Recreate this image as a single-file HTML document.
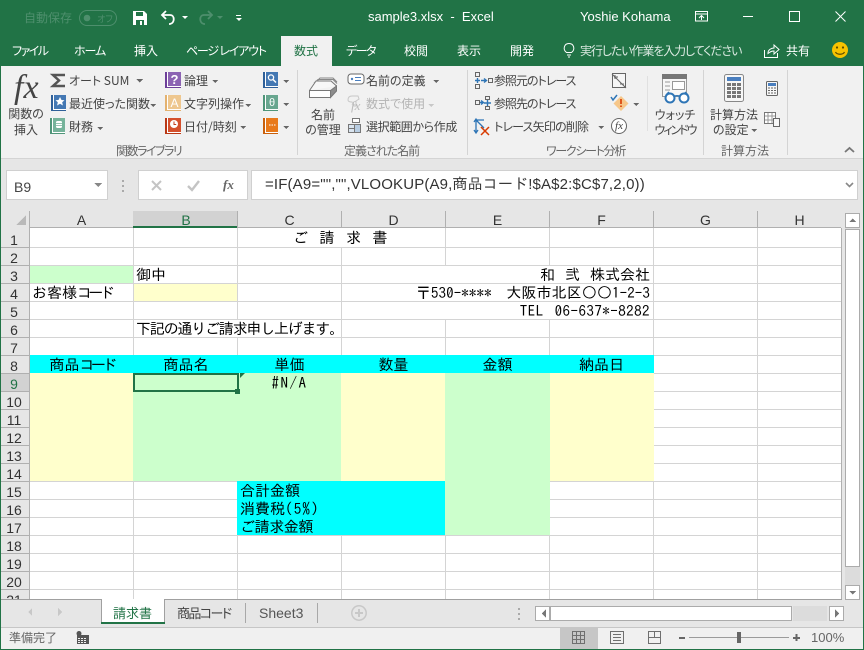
<!DOCTYPE html>
<html lang="ja"><head><meta charset="utf-8"><title>sample3.xlsx - Excel</title>
<style>
html,body{margin:0;padding:0;background:#fff}
#p{position:relative;width:864px;height:650px;overflow:hidden;font-family:"Liberation Sans","Noto Sans CJK JP",sans-serif;font-size:12px;color:#444}
#p svg{position:absolute;left:0;top:0}
.a{position:absolute;white-space:nowrap;line-height:16px}
.w{color:#fff}
.r{font-family:"Noto Sans CJK JP",sans-serif;font-size:12px;font-feature-settings:"palt";color:#444}
.g{font-family:"Noto Sans CJK JP",sans-serif;font-size:12px;font-feature-settings:"palt";color:#666}
.c{font-family:"IPAGothic","Noto Sans CJK JP",sans-serif;font-size:15px;color:#000;line-height:18px}
.k{letter-spacing:-3.7px}
.h{font-family:"Liberation Sans",sans-serif;font-size:14px;color:#333;text-align:center;line-height:18px}
.m{text-align:center}
</style></head><body><div id="p">
<svg width="864" height="650" viewBox="0 0 864 650" fill="none" shape-rendering="crispEdges">
<rect width="864" height="650" fill="#e6e6e6"/>
<rect width="864" height="66" fill="#217346"/>
<rect x="281" y="36" width="51" height="30" fill="#f1f1f1"/>
<rect x="1" y="66" width="863" height="92" fill="#f1f1f1"/>
<rect y="158" width="864" height="1" fill="#d4d4d4"/>
<rect x="0" y="66" width="1" height="584" fill="#217346"/>
<rect x="863" y="66" width="1" height="584" fill="#217346"/>
<rect y="649" width="864" height="1" fill="#217346"/>
<g fill="#d4d4d4"><rect x="297" y="70" width="1" height="85"/><rect x="467" y="70" width="1" height="85"/><rect x="703" y="70" width="1" height="85"/><rect x="787" y="70" width="1" height="85"/></g>
<rect x="647" y="76" width="1" height="55" fill="#e0e0e0"/>
<!-- formula bar -->
<rect x="6.5" y="170.5" width="101" height="29" fill="#fff" stroke="#d0d0d0"/>
<rect x="138.5" y="170.5" width="109" height="29" fill="#fff" stroke="#d0d0d0"/>
<rect x="251.5" y="170.5" width="606" height="29" fill="#fff" stroke="#d0d0d0"/>
<path d="M94 183h8l-4 4z" fill="#888"/>
<g fill="#aaa"><rect x="122" y="180" width="2" height="2"/><rect x="122" y="185" width="2" height="2"/><rect x="122" y="190" width="2" height="2"/></g>
<g shape-rendering="auto"><path d="M152 181l9 9M161 181l-9 9" stroke="#c4c4c4" stroke-width="2"/><path d="M188 186l4 4 7-9" stroke="#c4c4c4" stroke-width="2.4"/><path d="M846 183l3.500 3.500 3.500-3.500" stroke="#888" stroke-width="1.6"/></g>
<!-- grid -->
<rect x="30" y="228" width="811" height="371" fill="#fff"/>
<g fill="#ccffcc"><rect x="30" y="265" width="103" height="18"/><rect x="133" y="373" width="208" height="108"/><rect x="445" y="373" width="105" height="162"/></g>
<g fill="#ffffcc"><rect x="133" y="283" width="105" height="18"/><rect x="30" y="373" width="103" height="108"/><rect x="341" y="373" width="104" height="108"/><rect x="550" y="373" width="104" height="108"/></g>
<g fill="#00ffff"><rect x="30" y="355" width="624" height="18"/><rect x="237" y="481" width="208" height="54"/></g>
<g fill="#d4d4d4">
<rect x="30" y="247" width="811" height="1"/><rect x="30" y="265" width="811" height="1"/>
<rect x="133" y="283" width="708" height="1"/><rect x="30" y="301" width="811" height="1"/>
<rect x="30" y="319" width="811" height="1"/><rect x="30" y="337" width="811" height="1"/>
<rect x="30" y="283" width="103" height="1"/>
<rect x="654" y="355" width="187" height="1"/>
<rect x="654" y="373" width="187" height="1"/><rect x="654" y="391" width="187" height="1"/>
<rect x="654" y="409" width="187" height="1"/><rect x="654" y="427" width="187" height="1"/>
<rect x="654" y="445" width="187" height="1"/><rect x="654" y="463" width="187" height="1"/>
<rect x="30" y="481" width="207" height="1"/><rect x="550" y="481" width="291" height="1"/>
<rect x="30" y="499" width="207" height="1"/><rect x="550" y="499" width="291" height="1"/>
<rect x="30" y="517" width="207" height="1"/><rect x="550" y="517" width="291" height="1"/>
<rect x="30" y="535" width="811" height="1"/><rect x="30" y="553" width="811" height="1"/>
<rect x="30" y="571" width="811" height="1"/><rect x="30" y="589" width="811" height="1"/>
<rect x="133" y="228" width="1" height="127"/><rect x="133" y="481" width="1" height="118"/>
<rect x="237" y="228" width="1" height="91"/><rect x="237" y="337" width="1" height="18"/><rect x="237" y="535" width="1" height="64"/>
<rect x="341" y="247" width="1" height="108"/><rect x="341" y="535" width="1" height="64"/>
<rect x="445" y="228" width="1" height="37"/><rect x="445" y="319" width="1" height="36"/><rect x="445" y="535" width="1" height="64"/>
<rect x="549" y="228" width="1" height="37"/><rect x="549" y="319" width="1" height="36"/><rect x="549" y="535" width="1" height="64"/>
<rect x="653" y="228" width="1" height="127"/><rect x="653" y="481" width="1" height="118"/>
<rect x="757" y="228" width="1" height="371"/>
</g>
<!-- headers -->
<rect x="133" y="211" width="105" height="17" fill="#d2d2d2"/><rect x="133" y="226" width="105" height="2" fill="#217346"/>
<rect x="1" y="373" width="28" height="18" fill="#d2d2d2"/>
<g fill="#b0b0b0"><rect x="29" y="211" width="1" height="17"/><rect x="237" y="211" width="1" height="17"/><rect x="341" y="211" width="1" height="17"/><rect x="445" y="211" width="1" height="17"/><rect x="549" y="211" width="1" height="17"/><rect x="653" y="211" width="1" height="17"/><rect x="757" y="211" width="1" height="17"/><rect x="238" y="227" width="603" height="1"/><rect x="30" y="227" width="103" height="1"/><rect x="1" y="247" width="29" height="1"/><rect x="1" y="265" width="29" height="1"/><rect x="1" y="283" width="29" height="1"/><rect x="1" y="301" width="29" height="1"/><rect x="1" y="319" width="29" height="1"/><rect x="1" y="337" width="29" height="1"/><rect x="1" y="355" width="29" height="1"/><rect x="1" y="373" width="29" height="1"/><rect x="1" y="391" width="29" height="1"/><rect x="1" y="409" width="29" height="1"/><rect x="1" y="427" width="29" height="1"/><rect x="1" y="445" width="29" height="1"/><rect x="1" y="463" width="29" height="1"/><rect x="1" y="481" width="29" height="1"/><rect x="1" y="499" width="29" height="1"/><rect x="1" y="517" width="29" height="1"/><rect x="1" y="535" width="29" height="1"/><rect x="1" y="553" width="29" height="1"/><rect x="1" y="571" width="29" height="1"/><rect x="1" y="589" width="29" height="1"/><rect x="29" y="228" width="1" height="371"/><rect x="841" y="228" width="1" height="372"/></g>
<path d="M16 225h10v-10z" fill="#b9b9b9"/>
<rect x="134" y="374" width="104" height="17" fill="none" stroke="#217346" stroke-width="2"/>
<rect x="235" y="389" width="5" height="5" fill="#217346"/>
<path d="M240 373h5l-5 5z" fill="#217346" shape-rendering="auto"/>
<!-- scrollbars -->
<rect x="845" y="213" width="15" height="387" fill="#dcdcdc"/>
<rect x="845.5" y="213.5" width="14" height="14" fill="#fff" stroke="#ababab"/>
<path d="M849 222h7l-3.500-3.500z" fill="#777"/>
<rect x="845.5" y="229.500" width="14" height="337" fill="#fff" stroke="#ababab"/>
<rect x="845.5" y="585.5" width="14" height="14" fill="#fff" stroke="#ababab"/>
<path d="M849 591h7l-3.500 3.500z" fill="#777"/>
<rect x="793" y="606" width="34" height="15" fill="#dcdcdc"/>
<rect x="535.5" y="606.5" width="14" height="14" fill="#fff" stroke="#ababab"/>
<path d="M546 609v9l-4-4.500z" fill="#777"/>
<rect x="550.5" y="606.5" width="241" height="14" fill="#fff" stroke="#ababab"/>
<rect x="829.5" y="606.5" width="14" height="14" fill="#fff" stroke="#ababab"/>
<path d="M835 609v9l4-4.500z" fill="#777"/>
<g fill="#aaa"><rect x="518" y="608" width="2" height="2"/><rect x="518" y="613" width="2" height="2"/><rect x="518" y="618" width="2" height="2"/></g>
<!-- tab bar -->
<rect x="1" y="599" width="841" height="1" fill="#a0a0a0"/>
<rect x="102" y="599" width="62" height="24" fill="#fff"/>
<rect x="101" y="599" width="1" height="24" fill="#a0a0a0"/><rect x="164" y="599" width="1" height="24" fill="#a0a0a0"/>
<rect x="101" y="622" width="64" height="2" fill="#217346"/>
<rect x="245" y="603" width="1" height="20" fill="#a8a8a8"/><rect x="317" y="603" width="1" height="20" fill="#a8a8a8"/>
<path d="M32 608v8l-4-4zM58 608v8l4-4z" fill="#c8c8c8"/>
<g shape-rendering="auto"><circle cx="359" cy="613" r="7.200" stroke="#c8c8c8" stroke-width="1.500"/><path d="M355 613h8M359 609v8" stroke="#c8c8c8" stroke-width="2"/></g>
<!-- status bar -->
<rect x="1" y="627" width="862" height="1" fill="#c6c6c6"/>
<rect x="1" y="628" width="862" height="21" fill="#f0f0f0"/>
<rect x="560" y="628" width="38" height="21" fill="#c6c6c6"/>
<g stroke="#6f6f6f"><rect x="572.5" y="631.5" width="12" height="12"/><path d="M576.5 632v11M580.500 632v11M573 635.500h11M573 639.500h11"/><rect x="610.500" y="631.5" width="13" height="12"/><path d="M613 634.500h8M613 637.500h8M613 640.500h8"/><rect x="648.500" y="631.5" width="12" height="12"/><path d="M654.500 632v5M648.500 637.500h12"/></g>
<rect x="679" y="637" width="6" height="2" fill="#666"/>
<rect x="689" y="637" width="100" height="1" fill="#9b9b9b"/>
<rect x="737" y="632" width="4" height="11" fill="#666"/>
<path d="M793 638h7M796.500 634v7" stroke="#666" stroke-width="2"/>
<g fill="#555"><circle cx="79" cy="633.500" r="2.500" shape-rendering="auto"/><rect x="77" y="635" width="12" height="9"/><g fill="#f0f0f0"><rect x="78" y="638" width="2" height="1"/><rect x="81" y="638" width="2" height="1"/><rect x="84" y="638" width="2" height="1"/><rect x="78" y="640" width="2" height="1"/><rect x="81" y="640" width="2" height="1"/><rect x="84" y="640" width="2" height="1"/><rect x="78" y="642" width="2" height="1"/><rect x="81" y="642" width="2" height="1"/><rect x="84" y="642" width="2" height="1"/></g></g>
<!-- title bar icons -->
<g shape-rendering="auto">
<rect x="79.500" y="10.500" width="37" height="15" rx="7.500" stroke="#4e8f6d"/>
<circle cx="87" cy="18" r="3.300" fill="#4e8f6d"/>
<path d="M133 11h11l3 3v11h-14z" fill="#fff"/><rect x="136" y="12" width="7" height="4" fill="#217346"/><rect x="136" y="20" width="8" height="5" fill="#217346"/><rect x="140" y="21" width="2" height="4" fill="#fff"/>
<path d="M166 11l-4 4 4 4" stroke="#fff" stroke-width="1.800"/><path d="M163 15h7c5 0 5 8 0 9h-1" stroke="#fff" stroke-width="1.800"/>
<path d="M182 16h6l-3 3z" fill="#fff"/>
<path d="M208 11l4 4-4 4" stroke="#4e8f6d" stroke-width="1.800"/><path d="M211 15h-7c-5 0-5 8 0 9h1" stroke="#4e8f6d" stroke-width="1.800"/>
<path d="M217 16h6l-3 3z" fill="#4e8f6d"/>
<path d="M236 15.500h5" stroke="#fff"/><path d="M236 18h6l-3 3z" fill="#fff"/>
<rect x="695.500" y="11.500" width="12" height="9.500" stroke="#fff"/><path d="M695 14h13M701.500 20v-4M699 18l2.500-2.500 2.500 2.500" stroke="#fff"/>
<path d="M743 16.500h10" stroke="#fff"/><rect x="789.500" y="11.500" width="10" height="10" stroke="#fff" shape-rendering="crispEdges"/>
<path d="M835.500 11.500l10 10M845.500 11.500l-10 10" stroke="#fff"/>
<path d="M566.500 52.500c-4-3-2.500-9 2.500-9s6.500 6 2.500 9zM567 55h4M568 57h2" stroke="#fff"/>
<path d="M764.500 50v7.500h13V53" stroke="#fff"/><path d="M768 53c0-3 3-5 6-5v-3l5 4.500-5 4.500v-3c-3 0-4 1-6 2.500z" stroke="#fff"/>
<circle cx="840" cy="50" r="8" fill="#f8c300"/><circle cx="837" cy="47.500" r="1.100" fill="#5a4a00"/><circle cx="843" cy="47.500" r="1.100" fill="#5a4a00"/><path d="M835.500 52c1.500 3 7.500 3 9 0" stroke="#5a4a00" stroke-width="1.200"/>
</g>
<!-- ribbon icons -->
<g shape-rendering="auto">
<path d="M65 75H53l6 5.500-6 5.500h12" stroke="#555" stroke-width="2.500"/>
<g shape-rendering="crispEdges">
<rect x="51" y="95" width="15" height="16" fill="#2f6099"/><rect x="53" y="95" width="1" height="14" fill="#fff"/><rect x="53" y="109" width="13" height="1" fill="#fff"/><rect x="54" y="95" width="12" height="14" fill="#4478b3"/>
<rect x="50" y="118" width="15" height="16" fill="#4f9579"/><rect x="52" y="118" width="1" height="14" fill="#fff"/><rect x="52" y="132" width="13" height="1" fill="#fff"/><rect x="53" y="118" width="12" height="14" fill="#76b39b"/>
<rect x="165" y="72" width="16" height="16" fill="#6d3f99"/><rect x="167" y="72" width="1" height="14" fill="#fff"/><rect x="167" y="86" width="14" height="1" fill="#fff"/><rect x="168" y="72" width="13" height="14" fill="#8c63b3"/>
<rect x="165" y="95" width="16" height="16" fill="#e3b270"/><rect x="167" y="95" width="1" height="14" fill="#fff"/><rect x="167" y="109" width="14" height="1" fill="#fff"/><rect x="168" y="95" width="13" height="14" fill="#eec78f"/>
<rect x="165" y="118" width="16" height="16" fill="#b93815"/><rect x="167" y="118" width="1" height="14" fill="#fff"/><rect x="167" y="132" width="14" height="1" fill="#fff"/><rect x="168" y="118" width="13" height="14" fill="#d4502d"/>
<rect x="263" y="72" width="15" height="16" fill="#2f6099"/><rect x="265" y="72" width="1" height="14" fill="#fff"/><rect x="265" y="86" width="13" height="1" fill="#fff"/><rect x="266" y="72" width="12" height="14" fill="#4478b3"/>
<rect x="263" y="95" width="15" height="16" fill="#4f9579"/><rect x="265" y="95" width="1" height="14" fill="#fff"/><rect x="265" y="109" width="13" height="1" fill="#fff"/><rect x="266" y="95" width="12" height="14" fill="#68a68f"/>
<rect x="263" y="118" width="15" height="16" fill="#c9600c"/><rect x="265" y="118" width="1" height="14" fill="#fff"/><rect x="265" y="132" width="13" height="1" fill="#fff"/><rect x="266" y="118" width="12" height="14" fill="#e8791a"/>
</g>
<path d="M60 97l1.500 3 3 .3-2.300 2 .7 3.200-2.900-1.700-2.900 1.700.7-3.200-2.300-2 3-.3z" fill="#fff"/>
<rect x="56" y="121" width="6" height="7" rx="1.500" fill="#fff"/><path d="M56 123.500h6M56 125.500h6" stroke="#76b39b" stroke-width=".7"/>
<circle cx="174" cy="124" r="4" fill="#fff"/><path d="M174 121.500v3h2.200" stroke="#c43e1c"/>
<circle cx="271" cy="77.500" r="2.600" stroke="#fff" stroke-width="1.300"/><path d="M273 79.500l3 3" stroke="#fff" stroke-width="1.500"/>
<path d="M269 125h1.500M271.500 125h1.500M274 125h1.500" stroke="#fff"/>
<!-- 名前の管理 -->
<path d="M309.500 90.500L316 81H331L336.500 86" fill="#f7f7f7" stroke="#777"/><path d="M314 83l4-3.500h15l4 4M317 81l3-3h13l4 4" stroke="#888"/>
<path d="M330.500 97.500l6-6.500v-5l-6 4.500z" fill="#8c8c8c" stroke="#777"/>
<rect x="309.500" y="90.500" width="21" height="7" fill="#fff" stroke="#777"/>
<!-- 名前 small icons -->
<rect x="348" y="74" width="16" height="10" rx="3" stroke="#666" fill="#fff"/><circle cx="352" cy="79" r="1.200" fill="#4a7fbf"/><path d="M355 77.500h6M355 80.500h6" stroke="#4a7fbf"/>
<path d="M348 100c0-3 2-4 4-4h6l1 3-3 2v5h-2l-2-4c-3 0-4-1-4-2z" stroke="#c8c8c8"/>
<rect x="348.500" y="124.500" width="6" height="4" fill="#d9e4ef" stroke="#777"/><rect x="354.500" y="124.500" width="6" height="8" fill="#b8cde2" stroke="#777"/><rect x="348.500" y="128.500" width="6" height="4" fill="#d9e4ef" stroke="#777"/><rect x="352.500" y="118.500" width="7" height="4" fill="#fff" stroke="#777"/>
<!-- 参照元/先 -->
<g stroke="#666" shape-rendering="crispEdges"><rect x="475.500" y="72.500" width="4" height="4"/><rect x="475.500" y="84.500" width="4" height="4"/><rect x="488.500" y="78.500" width="4" height="4"/><rect x="475.500" y="100.500" width="4" height="4"/><rect x="485.500" y="96.500" width="4" height="3"/><rect x="485.500" y="106.500" width="4" height="3"/></g>
<path d="M475 80.500h5M477.500 78v5M481 80.500h5M484 78.500l2.500 2-2.500 2" stroke="#2e75b6" stroke-width="1.400"/>
<path d="M484 103h7M487.500 100v6M480 102.500h3M481 100.500l2.500 2-2.500 2" stroke="#2e75b6" stroke-width="1.400"/>
<path d="M476 120v12M474 122l2-3 2 3M474 130l2 3 2-3M476 120h8M476 120l8 8" stroke="#2e75b6" stroke-width="1.300"/><path d="M481 127l8 8M489 127l-8 8" stroke="#d83b01" stroke-width="1.500"/>
<!-- audit icons -->
<rect x="612.500" y="73.500" width="13" height="14" fill="#f6f6f6" stroke="#666"/><path d="M612 74l14 14M614 77h4M620 84h4M615 75v4" stroke="#666"/>
<path d="M611 97l2 3 4-5" stroke="#2e75b6" stroke-width="1.500"/>
<path d="M621 96l7.500 7.500-7.500 7.500-7.500-7.500z" fill="#f6c78a"/><path d="M621 99v5M621 105.500v1.500" stroke="#d83b01" stroke-width="1.600"/>
<circle cx="619" cy="126" r="7.500" stroke="#666" fill="#fff"/>
<!-- watch -->
<rect x="662.500" y="74.500" width="24" height="22" fill="#f7f7f7" stroke="#999"/><rect x="662" y="74" width="25" height="5" fill="#777"/><rect x="672.500" y="81.500" width="12" height="8" fill="#fff" stroke="#999"/><path d="M665 82h5M665 86h5M665 90h5" stroke="#999"/>
<circle cx="670" cy="98" r="4.500" fill="#fff" stroke="#2e75b6" stroke-width="2"/><circle cx="684" cy="98" r="4.500" fill="#fff" stroke="#2e75b6" stroke-width="2"/><path d="M674 96.500c1-1 5-1 6 0M666 95l3-3M688 95l-3-3" stroke="#2e75b6" stroke-width="1.500"/>
<!-- calc -->
<rect x="724.500" y="74.500" width="19" height="27" rx="2" fill="#f7f7f7" stroke="#888"/><rect x="727" y="77" width="14" height="4" fill="#4a7fbf"/>
<g fill="#777" shape-rendering="crispEdges"><rect x="727" y="83" width="4" height="3"/><rect x="732" y="83" width="4" height="3"/><rect x="737" y="83" width="4" height="3"/><rect x="727" y="87" width="4" height="3"/><rect x="732" y="87" width="4" height="3"/><rect x="737" y="87" width="4" height="3"/><rect x="727" y="91" width="4" height="3"/><rect x="732" y="91" width="4" height="3"/><rect x="737" y="91" width="4" height="3"/><rect x="727" y="95" width="4" height="3"/><rect x="732" y="95" width="4" height="3"/><rect x="737" y="95" width="4" height="3"/></g>
<rect x="766.500" y="81.500" width="11" height="14" rx="1" fill="#f7f7f7" stroke="#666"/><rect x="768" y="83" width="8" height="3" fill="#4a7fbf"/><path d="M768 88h8M768 90.500h8M768 93h8" stroke="#666" stroke-dasharray="2 1"/>
<rect x="764.500" y="112.500" width="11" height="11" fill="#fff" stroke="#777"/><path d="M768 113v10M772 113v10M765 116h10M765 120h10" stroke="#999"/><rect x="773.500" y="118.500" width="6" height="8" fill="#f7f7f7" stroke="#666"/>
<path d="M845 152l4.500-4 4.500 4" stroke="#777" stroke-width="1.800"/>
</g>
<!-- dropdown arrows -->
<g fill="#666"><path d="M136 79h7l-3.500 3.500z"/><path d="M150 104h6l-3 3z"/><path d="M97 127h6l-3 3z"/><path d="M212 80h6l-3 3z"/><path d="M245 104h6l-3 3z"/><path d="M240 126h6l-3 3z"/><path d="M283 80h6l-3 3z"/><path d="M283 103h6l-3 3z"/><path d="M283 126h6l-3 3z"/><path d="M433 80h6l-3 3z"/><path d="M428 104h6l-3 3z" fill="#c8c8c8"/><path d="M598 126h6l-3 3z"/><path d="M633 103h6l-3 3z"/><path d="M751 129h6l-3 3z"/></g>
</svg>

<span class="a r" style="left:24px;top:10px;color:#4e8f6d">自動保存</span>
<span class="a r" style="left:97px;top:11px;color:#4e8f6d;font-size:9px">オフ</span>
<span class="a w" style="left:368px;top:9px;font-size:13px">sample3.xlsx &nbsp;-&nbsp; Excel</span>
<span class="a w" style="left:580px;top:9px;font-size:13px">Yoshie Kohama</span>

<span class="a r" style="left:12px;top:43px;color:#fff;letter-spacing:-1.500px">ファイル</span>
<span class="a r" style="left:74px;top:43px;color:#fff;letter-spacing:-1px">ホーム</span>
<span class="a r" style="left:134px;top:43px;color:#fff">挿入</span>
<span class="a r" style="left:186px;top:43px;color:#fff;letter-spacing:-1.200px">ページ レイアウト</span>
<span class="a r" style="left:294px;top:43px;color:#217346">数式</span>
<span class="a r" style="left:346px;top:43px;color:#fff;letter-spacing:-1.500px">データ</span>
<span class="a r" style="left:404px;top:43px;color:#fff">校閲</span>
<span class="a r" style="left:457px;top:43px;color:#fff">表示</span>
<span class="a r" style="left:510px;top:43px;color:#fff">開発</span>
<span class="a r" style="left:580px;top:43px;color:#dbe9e1;letter-spacing:-1.100px">実行したい作業を入力してください</span>
<span class="a r" style="left:786px;top:43px;color:#fff">共有</span>

<span class="a" style="left:14px;top:73px;font-family:'Liberation Serif',serif;font-style:italic;font-size:34px;line-height:30px;color:#444">fx</span>
<span class="a r m" style="left:5px;top:106px;width:42px">関数の</span>
<span class="a r m" style="left:5px;top:122px;width:42px">挿入</span>
<span class="a r" style="left:69px;top:73px">オート SUM</span>
<span class="a r" style="left:69px;top:96px">最近使った関数</span>
<span class="a r" style="left:69px;top:119px">財務</span>
<span class="a" style="left:168px;top:72px;width:13px;text-align:center;color:#fff;font-size:13px;font-weight:bold">?</span>
<span class="a" style="left:168px;top:95px;width:13px;text-align:center;color:#fff;font-size:12px">A</span>
<span class="a" style="left:266px;top:95px;width:12px;text-align:center;color:#fff;font-size:11px">θ</span>
<span class="a r" style="left:184px;top:73px">論理</span>
<span class="a r" style="left:184px;top:96px">文字列操作</span>
<span class="a r" style="left:184px;top:119px">日付/時刻</span>
<span class="a g" style="left:116px;top:143px;letter-spacing:-1.500px">関数ライブラリ</span>
<span class="a r m" style="left:303px;top:107px;width:40px">名前</span>
<span class="a r m" style="left:303px;top:122px;width:40px">の管理</span>
<span class="a r" style="left:366px;top:73px">名前の定義</span>
<span class="a r" style="left:366px;top:96px;color:#b4b4b4">数式で使用</span>
<span class="a" style="left:351px;top:98px;font-family:'Liberation Serif',serif;font-style:italic;font-size:13px;color:#bbb">fx</span>
<span class="a r" style="left:366px;top:119px;letter-spacing:-.4px">選択範囲から作成</span>
<span class="a g" style="left:344px;top:143px;letter-spacing:-1px">定義された名前</span>
<span class="a r" style="left:494px;top:73px;letter-spacing:-1px">参照元のトレース</span>
<span class="a r" style="left:494px;top:96px;letter-spacing:-1px">参照先のトレース</span>
<span class="a r" style="left:494px;top:119px;letter-spacing:-.8px">トレース矢印の削除</span>
<span class="a g" style="left:546px;top:143px;letter-spacing:-1.300px">ワークシート分析</span>
<span class="a" style="left:612px;top:118px;width:14px;text-align:center;font-family:'Liberation Serif',serif;font-style:italic;font-size:11px;color:#444">fx</span>
<span class="a r m" style="left:650px;top:107px;width:50px">ウォッチ</span>
<span class="a r m" style="left:650px;top:122px;width:50px;letter-spacing:-2px">ウィンドウ</span>
<span class="a r m" style="left:706px;top:107px;width:56px">計算方法</span>
<span class="a r" style="left:713px;top:122px">の設定</span>
<span class="a g" style="left:721px;top:143px">計算方法</span>

<span class="a" style="left:14px;top:179px;font-size:14px;line-height:16px;color:#444">B9</span>
<span class="a" style="left:223px;top:177px;font-family:'Liberation Serif',serif;font-style:italic;font-weight:bold;font-size:13px;color:#666">fx</span>
<span class="a" style="left:265px;top:177px;font-family:'Liberation Sans','IPAGothic',sans-serif;font-size:15px;letter-spacing:.15px;color:#333">=IF(A9="","",VLOOKUP(A9,商品コード!$A$2:$C$7,2,0))</span>

<span class="a h" style="left:30px;top:211px;width:103px">A</span>
<span class="a h" style="left:134px;top:211px;width:104px;color:#217346">B</span>
<span class="a h" style="left:238px;top:211px;width:103px">C</span>
<span class="a h" style="left:342px;top:211px;width:103px">D</span>
<span class="a h" style="left:446px;top:211px;width:103px">E</span>
<span class="a h" style="left:550px;top:211px;width:103px">F</span>
<span class="a h" style="left:654px;top:211px;width:103px">G</span>
<span class="a h" style="left:758px;top:211px;width:83px">H</span>
<span class="a h" style="left:1px;top:231px;width:26px">1</span>
<span class="a h" style="left:1px;top:249px;width:26px">2</span>
<span class="a h" style="left:1px;top:267px;width:26px">3</span>
<span class="a h" style="left:1px;top:285px;width:26px">4</span>
<span class="a h" style="left:1px;top:303px;width:26px">5</span>
<span class="a h" style="left:1px;top:321px;width:26px">6</span>
<span class="a h" style="left:1px;top:339px;width:26px">7</span>
<span class="a h" style="left:1px;top:357px;width:26px">8</span>
<span class="a h" style="left:1px;top:375px;width:26px;color:#217346">9</span>
<span class="a h" style="left:1px;top:393px;width:26px">10</span>
<span class="a h" style="left:1px;top:411px;width:26px">11</span>
<span class="a h" style="left:1px;top:429px;width:26px">12</span>
<span class="a h" style="left:1px;top:447px;width:26px">13</span>
<span class="a h" style="left:1px;top:465px;width:26px">14</span>
<span class="a h" style="left:1px;top:483px;width:26px">15</span>
<span class="a h" style="left:1px;top:501px;width:26px">16</span>
<span class="a h" style="left:1px;top:519px;width:26px">17</span>
<span class="a h" style="left:1px;top:537px;width:26px">18</span>
<span class="a h" style="left:1px;top:555px;width:26px">19</span>
<span class="a h" style="left:1px;top:573px;width:26px">20</span>
<div class="a" style="left:1px;top:590px;width:28px;height:9px;overflow:hidden"><span class="a h" style="left:0;top:1px;width:26px">21</span></div>

<span class="a c" style="left:293px;top:229px;word-spacing:4px">ご 請 求 書</span>
<span class="a c" style="left:136px;top:266px">御中</span>
<span class="a c" style="left:32px;top:284px">お客様<span class="k">コード</span></span>
<span class="a c" style="right:214px;top:266px;word-spacing:2.500px">和 弐 株式会社</span>
<span class="a c" style="right:214px;top:284px;word-spacing:7px;letter-spacing:.1px">〒530-**** 大阪市北区○○1-2-3</span>
<span class="a c" style="right:214px;top:302px;letter-spacing:.45px;word-spacing:3px">TEL 06-637*-8282</span>
<span class="a c" style="left:136px;top:320px;letter-spacing:-1.2px">下記の通りご請求申し上げます。</span>
<span class="a c m" style="left:30px;top:356px;width:103px">商品<span class="k">コード</span></span>
<span class="a c m" style="left:134px;top:356px;width:104px">商品名</span>
<span class="a c m" style="left:238px;top:356px;width:103px">単価</span>
<span class="a c m" style="left:342px;top:356px;width:103px">数量</span>
<span class="a c m" style="left:446px;top:356px;width:103px">金額</span>
<span class="a c m" style="left:550px;top:356px;width:103px">納品日</span>
<span class="a c m" style="left:238px;top:374px;width:103px;letter-spacing:1.500px">#N/A</span>
<span class="a c" style="left:240px;top:482px">合計金額</span>
<span class="a c" style="left:240px;top:500px">消費税<span style="letter-spacing:1.200px">(5%)</span></span>
<span class="a c" style="left:240px;top:518px;letter-spacing:-.4px">ご請求金額</span>

<span class="a r" style="left:113px;top:605px;color:#217346;font-size:13px">請求書</span>
<span class="a r" style="left:177px;top:605px;font-size:13px;letter-spacing:-1.600px">商品コード</span>
<span class="a" style="left:259px;top:605px;font-size:14px;color:#555">Sheet3</span>
<span class="a r" style="left:9px;top:630px;color:#666">準備完了</span>
<span class="a" style="left:811px;top:630px;font-size:13px;color:#666">100%</span>
</div></body></html>
